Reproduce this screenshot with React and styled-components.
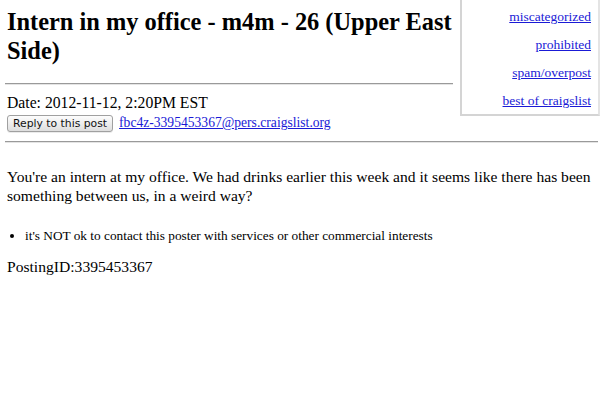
import React from 'react'
import styled, { createGlobalStyle } from 'styled-components'

const GlobalStyle = createGlobalStyle`
  html, body {
    margin: 0;
    padding: 0;
    background: #fff;
  }
  body {
    font-family: 'Liberation Serif', 'Times New Roman', serif;
    color: #000;
  }
`

const flags = ['miscategorized', 'prohibited', 'spam/overpost', 'best of craigslist']

const App = () => {
  return (
    <>
      <GlobalStyle />
      <Wrapper>
        <div className='top'>
          <div className='head'>
            <h2 className='title'>Intern in my office - m4m - 26 (Upper East Side)</h2>
            <Rule />
            <div className='date'>Date: 2012-11-12, 2:20PM EST</div>
            <div className='reply'>
              <ReplyButton type='button'>Reply to this post</ReplyButton>
              <Link href='#'>fbc4z-3395453367@pers.craigslist.org</Link>
            </div>
          </div>
          <FlagBox>
            {flags.map((flag) => (
              <FlagLink key={flag} href='#'>
                {flag}
              </FlagLink>
            ))}
          </FlagBox>
        </div>
        <Rule $full />
        <div className='body'>
          You're an intern at my office. We had drinks earlier this week and it seems like there has been
          something between us, in a weird way?
        </div>
        <ul className='notes'>
          <li>it's NOT ok to contact this poster with services or other commercial interests</li>
        </ul>
        <div className='posting'>PostingID:3395453367</div>
      </Wrapper>
    </>
  )
}

const Wrapper = styled.div`
  width: 600px;
  height: 400px;
  overflow: hidden;
  padding-left: 5px;
  box-sizing: border-box;

  .top {
    display: flex;
    align-items: flex-start;
    gap: 7px;
  }
  .head {
    width: 448px;
    padding-top: 7px;
  }
  .title {
    margin: 0 0 18px 2px;
    font-size: 24.4px;
    line-height: 29px;
    font-weight: bold;
  }
  .date {
    margin: 9px 0 0 2px;
    font-size: 15.7px;
    line-height: 18px;
  }
  .reply {
    display: flex;
    align-items: center;
    gap: 6px;
    margin: 2px 0 0 2px;
    height: 18px;
  }
  .body {
    margin: 24px 0 0 2px;
    font-size: 15.6px;
    line-height: 19px;
    width: 594px;
  }
  .notes {
    margin: 23px 0 0 0;
    padding-left: 20px;
    font-size: 13.3px;
    line-height: 16px;
  }
  .posting {
    margin: 14px 0 0 2px;
    font-size: 15.6px;
    line-height: 18px;
  }
`

const Rule = styled.div`
  height: 0;
  border-top: 1px solid #9a9a9a;
  border-bottom: 1px solid #e4e4e4;
  width: ${(p) => (p.$full ? '593px' : '448px')};
  margin-top: ${(p) => (p.$full ? '9px' : '0')};
`

const ReplyButton = styled.button`
  height: 17px;
  padding: 0 5px;
  font-family: 'DejaVu Sans', 'Lucida Grande', sans-serif;
  font-size: 10.8px;
  color: #111;
  background: linear-gradient(#fdfdfd, #dedede);
  border: 1px solid #a0a0a0;
  border-radius: 3px;
  box-shadow: 0 1px 0 rgba(0, 0, 0, 0.08);
`

const Link = styled.a`
  color: #1a1ad6;
  font-size: 13.6px;
  text-decoration: underline;
`

const FlagBox = styled.div`
  flex: 1;
  display: flex;
  flex-direction: column;
  align-items: flex-end;
  gap: 12px;
  height: 116px;
  box-sizing: border-box;
  padding: 9px 7px 0 0;
  border-left: 2px solid #d4d4d4;
  border-bottom: 2px solid #d4d4d4;
  border-right: 2px solid #e4e4e4;
`

const FlagLink = styled.a`
  color: #1a1ad6;
  font-size: 13.5px;
  line-height: 16px;
  text-decoration: underline;
`

export default App
